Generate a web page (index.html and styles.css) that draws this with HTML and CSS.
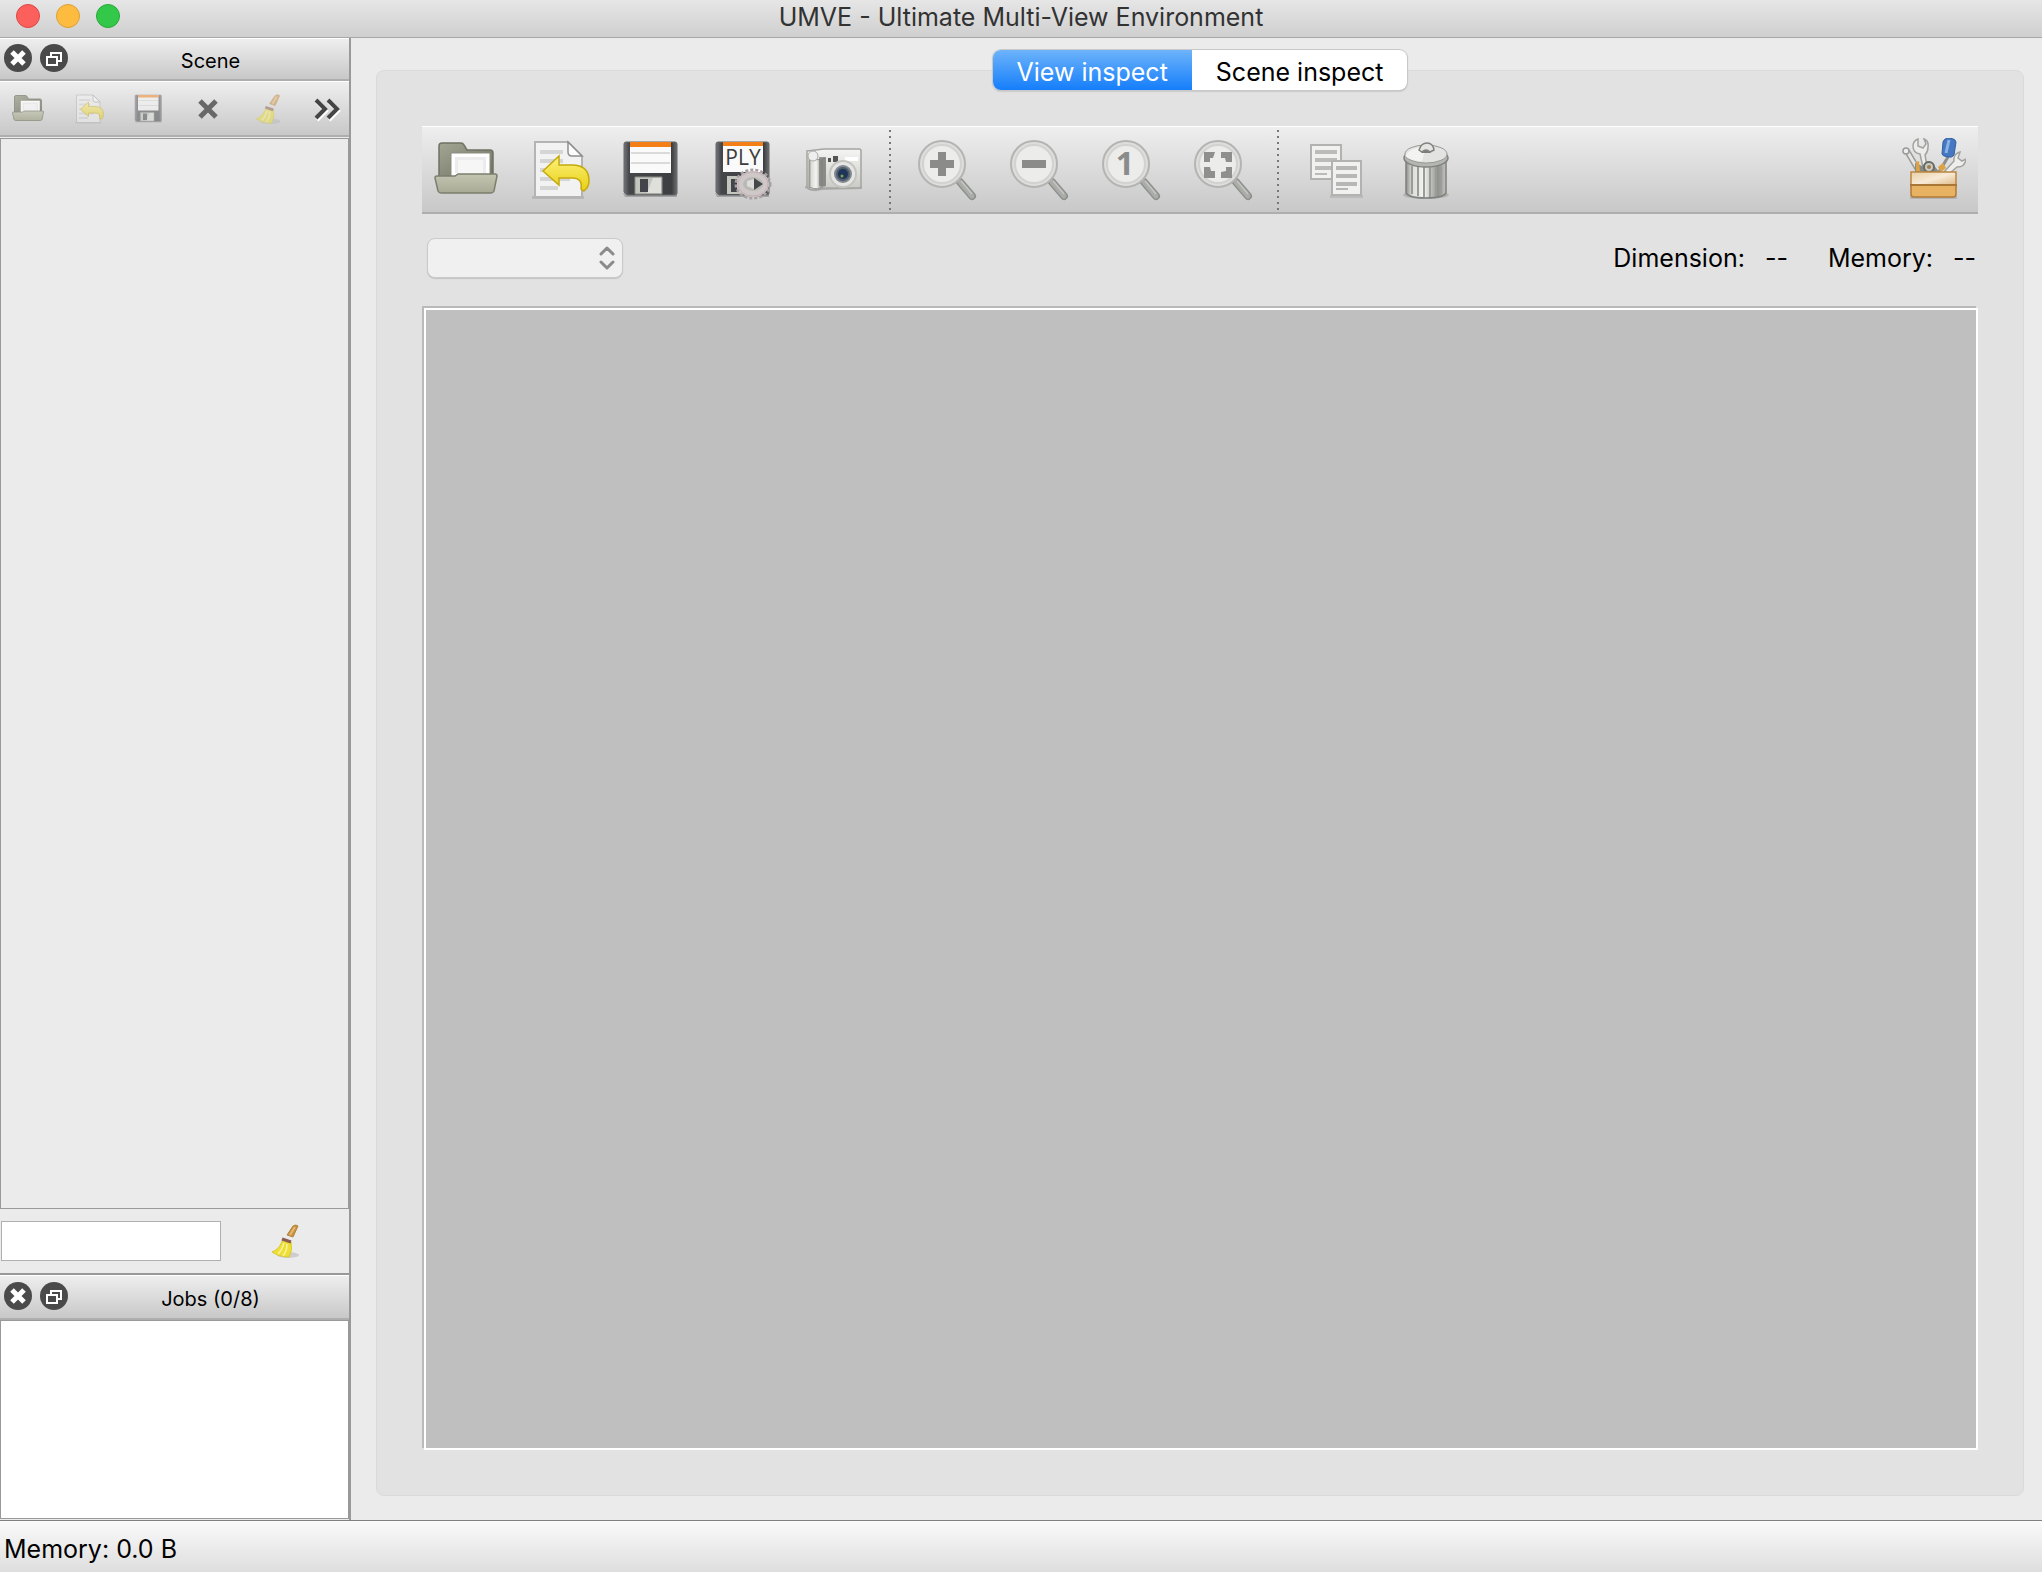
FILE: index.html
```html
<!DOCTYPE html>
<html lang="en">
<head>
  <meta charset="UTF-8">
  <meta name="viewport" content="width=device-width, initial-scale=1.0">
  <title>UMVE - Ultimate Multi-View Environment</title>
  <link rel="stylesheet" href="styles.css">
</head>
<body>
  <!-- icon sprite -->
  <svg class="sprite" aria-hidden="true">
    <defs>
      <linearGradient id="gTray" x1="0" y1="0" x2="0" y2="1">
        <stop offset="0" stop-color="#c3c5b2"/><stop offset="1" stop-color="#a8aa94"/>
      </linearGradient>
      <linearGradient id="gFolder" x1="0" y1="0" x2="1" y2="1">
        <stop offset="0" stop-color="#a3a693"/><stop offset="1" stop-color="#6d7060"/>
      </linearGradient>
      <linearGradient id="gArrow" x1="0" y1="0" x2="0" y2="1">
        <stop offset="0" stop-color="#fdf27c"/><stop offset="1" stop-color="#e8cf12"/>
      </linearGradient>
      <linearGradient id="gMetal" x1="0" y1="0" x2="1" y2="0">
        <stop offset="0" stop-color="#8d8f8a"/><stop offset="0.15" stop-color="#dcddd9"/>
        <stop offset="0.45" stop-color="#f4f4f2"/><stop offset="0.8" stop-color="#8e908b"/>
        <stop offset="1" stop-color="#c4c5c1"/>
      </linearGradient>
      <linearGradient id="gDisk" x1="0" y1="0" x2="1" y2="0">
        <stop offset="0" stop-color="#73757a"/><stop offset="0.1" stop-color="#44464a"/>
        <stop offset="0.9" stop-color="#3c3e41"/><stop offset="1" stop-color="#6d6f73"/>
      </linearGradient>
      <linearGradient id="gCamera" x1="0" y1="0" x2="0" y2="1">
        <stop offset="0" stop-color="#f5f5f3"/><stop offset="1" stop-color="#c8c9c3"/>
      </linearGradient>
      <linearGradient id="gWood" x1="0" y1="0" x2="1" y2="1">
        <stop offset="0" stop-color="#e9cfa6"/><stop offset="0.5" stop-color="#f7ead7"/>
        <stop offset="1" stop-color="#dcb67e"/>
      </linearGradient>
    </defs>

    <symbol id="icon-folder" viewBox="0 0 64 64">
      <path d="M5 40V8q0-3 3-3h19q2 0 3 2l3 5h23q3 0 3 3v25z" fill="url(#gFolder)" stroke="#6f7264" stroke-width="1.5"/>
      <path d="M17 15h39v24H17z" fill="#fff" stroke="#8b8d80"/>
      <path d="M21 19h31v16H21z" fill="#ececec"/>
      <path d="M24 22h25v13H24z" fill="#f6f6f6"/>
      <path d="M1 40q0-2 2-2h18l3-2h37q2 0 2 2l-3 15q-1 2-3 2H7q-2 0-3-2z" fill="url(#gTray)" stroke="#7c7e6d" stroke-width="1.5"/>
    </symbol>

    <symbol id="icon-revert" viewBox="0 0 64 64">
      <path d="M6 58h52v3H6z" fill="#a9a9a9" opacity="0.6"/>
      <path d="M9 4h33l14 14v41H9z" fill="#f2f2f2" stroke="#b4b4b4" stroke-width="2"/>
      <path d="M14 12h23v4H14zM14 21h23v4H14zM14 30h30v4H14zM14 39h30v4H14zM14 48h18v4H14z" fill="#d5d5d5"/>
      <path d="M42 4l14 14H46q-4 0-4-4z" fill="#fdfdfd" stroke="#8f8f8f" stroke-width="1.5"/>
      <path d="M17 33l16-15v9h13q17 0 17 16 0 6-5 10-2-1-3-2 2-11-9-11H33v7z" fill="url(#gArrow)" stroke="#c5aa0c" stroke-width="1.5"/>
    </symbol>

    <symbol id="icon-save" viewBox="0 0 64 64">
      <path d="M5 55h54v4H7z" fill="#777" opacity="0.5"/>
      <path d="M8 4h49q2 0 2 2v49q0 2-2 2H9l-3-3V6q0-2 2-2z" fill="url(#gDisk)" stroke="#65676a"/>
      <path d="M12 4h41v31H12z" fill="#fafafa"/>
      <path d="M12 4h41v5H12z" fill="#f57f17"/>
      <path d="M13 15h39M13 25h39" stroke="#dadada" stroke-width="2"/>
      <path d="M17 39h27v17H17z" fill="#c3c6bd" stroke="#8e908b"/>
      <path d="M35 40h8v15H29z" fill="#dfe0dc"/>
      <path d="M22 41h8v13h-8z" fill="#43454a"/>
    </symbol>

    <symbol id="icon-camera" viewBox="0 0 64 64">
      <path d="M3 48h57v3l-40 1q-9 3-17-2z" fill="#999" opacity="0.6"/>
      <path d="M5 13l17-2h35q2 0 2 2v35q0 2-2 2H24l-12 2q-6 0-7-4z" fill="url(#gCamera)" stroke="#a4a5a0" stroke-width="1.5"/>
      <path d="M7 19q6 5 16 1v28q-7 5-16 1z" fill="url(#gMetal)" stroke="#979893"/>
      <path d="M17 19h7v29h-7z" fill="#7d7f79" opacity="0.75"/>
      <circle cx="11" cy="18" r="5" fill="#eee" stroke="#aaa"/>
      <path d="M26 20h3v4h-3zM31 18h5v6h-5z" fill="#555"/>
      <path d="M43 19h13v4H43z" fill="#fff"/>
      <circle cx="41" cy="36" r="13" fill="#e6e7e4" stroke="#c4c5c0" stroke-width="2"/>
      <circle cx="41" cy="36" r="8" fill="#4e5d6d" stroke="#83888e" stroke-width="2"/>
      <circle cx="41" cy="36" r="5" fill="#1e3557"/>
      <circle cx="40" cy="38" r="1.5" fill="#85a04c"/>
    </symbol>

    <symbol id="icon-lens" viewBox="0 0 64 64">
      <path d="M46 44l12 14" stroke="#8d8f8b" stroke-width="8" stroke-linecap="round"/>
      <path d="M46 44l12 14" stroke="#aaaca8" stroke-width="5" stroke-linecap="round"/>
      <path d="M47 43l11 13" stroke="#c4c5c2" stroke-width="1.5"/>
      <circle cx="28" cy="26" r="23" fill="#dededc" stroke="#b4b4b2" stroke-width="2"/>
      <circle cx="28" cy="26" r="19" fill="#ececeb" stroke="#d2d2d0" stroke-width="2"/>
    </symbol>
    <symbol id="icon-zoom-in" viewBox="0 0 64 64">
      <use href="#icon-lens"/>
      <path d="M24 14h8v8h8v8h-8v8h-8v-8h-8v-8h8z" fill="#8b8b8a"/>
    </symbol>
    <symbol id="icon-zoom-out" viewBox="0 0 64 64">
      <use href="#icon-lens"/>
      <path d="M16 22h24v8H16z" fill="#8b8b8a"/>
    </symbol>
    <symbol id="icon-zoom-fit" viewBox="0 0 64 64">
      <use href="#icon-lens"/>
      <path d="M14 24V14h11l-2 6h-3v4zM31 14h11v10h-6l-1-4h-4zM14 29h6l1 4h4v7H14zM42 29v11H31v-6l5-1v-4z" fill="#8f8f8e"/>
    </symbol>

    <symbol id="icon-copy" viewBox="0 0 64 64">
      <path d="M9 7h30v34H9z" fill="#f1f1f0" stroke="#b2b2b0" stroke-width="2"/>
      <path d="M13 12h22v4H13zM13 20h22v4H13zM13 28h22v4H13zM13 35h12v2H13z" fill="#bbbbb9"/>
      <path d="M28 57h33v3H28z" fill="#999" opacity="0.35"/>
      <path d="M30 23h29v34H30z" fill="#f1f1f0" stroke="#b2b2b0" stroke-width="2"/>
      <path d="M34 28h21v4H34zM34 36h21v4H34zM34 44h21v4H34zM34 50h12v2H34z" fill="#b7b7b5"/>
    </symbol>

    <symbol id="icon-trash" viewBox="0 0 64 64">
      <ellipse cx="32" cy="57" rx="23" ry="4" fill="#888" opacity="0.4"/>
      <path d="M12 24h40v31q-3 5-20 5t-20-5z" fill="url(#gMetal)" stroke="#7f817c" stroke-width="1.5"/>
      <path d="M18 28v28M24 29v29M30 29v30M36 29v30M42 29v29M47 28v28" stroke="#9a9c97" stroke-width="2"/>
      <ellipse cx="32" cy="20" rx="22" ry="9" fill="#b4b6b1" stroke="#80827d" stroke-width="1.5"/>
      <ellipse cx="32" cy="16" rx="21" ry="9" fill="#e3e4e1" stroke="#989a95"/>
      <path d="M11 18q5-9 21-9l-4 14q-11 0-17-5z" fill="#f6f6f5" opacity="0.8"/>
      <path d="M25 12q2-7 8-7t7 7l-4 2q-4-4-8 0z" fill="#e5e6e3" stroke="#80827d" stroke-width="1.5"/>
      <path d="M27 15q5-5 10 0z" fill="#7c7e79"/>
    </symbol>

    <symbol id="icon-toolbox" viewBox="0 0 64 64">
      <path d="M18 35L5 13" stroke="#9a9b97" stroke-width="6"/>
      <path d="M18 35L5 13" stroke="#e6e6e4" stroke-width="3"/>
      <circle cx="4" cy="13" r="3" fill="#eee" stroke="#9a9b97" stroke-width="1.5"/>
      <path d="M22 34l-4-18q-7-1-7-8 0-5 5-7v7l5 2 3-4-2-5q5 2 4 8 0 5-3 8l3 17z" fill="#ececea" stroke="#a2a39f" stroke-width="1.5"/>
      <path d="M37 34l9-15" stroke="#8d8f8b" stroke-width="3"/>
      <path d="M41 4q1-4 7-4 6 1 6 4l-2 13q-2 3-6 2-6-1-6-3z" fill="#4577c2" stroke="#33609f"/>
      <path d="M47 2l-3 13" stroke="#8bb2e6" stroke-width="3"/>
      <path d="M42 34l10-11q-1-7 6-9l-2 6 4 3 4-2q-1 8-9 8l-7 6z" fill="#eeeeec" stroke="#a2a39f" stroke-width="1.5"/>
      <path d="M13 34v-9l7 3 5-5 6 3 6 8z" fill="#878983"/>
      <circle cx="27" cy="29" r="5" fill="#c9cac5" stroke="#696b66" stroke-width="2"/>
      <circle cx="27" cy="29" r="2" fill="#a27f45"/>
      <path d="M36 29l5-4 3 5-5 4zM14 24l3-1 1 10h-4z" fill="#dca344"/>
      <path d="M8 58h47v3H8z" fill="#999" opacity="0.5"/>
      <path d="M9 34h45v14H9z" fill="url(#gWood)" stroke="#bd8640" stroke-width="1.5"/>
      <path d="M9 47h45v9q0 3-3 3H12q-3 0-3-3z" fill="#e8b263" stroke="#b07a37" stroke-width="1.5"/>
      <path d="M8 47h47" stroke="#a87735" stroke-width="2"/>
    </symbol>

    <symbol id="icon-broom" viewBox="0 0 36 36">
      <ellipse cx="21" cy="32" rx="11" ry="3" fill="#888" opacity="0.3"/>
      <path d="M26 3q3-2 5 0l-5 11-6-2z" fill="#c78f3e" stroke="#b5863f"/>
      <path d="M28 4l-5 8" stroke="#e4b873" stroke-width="2"/>
      <path d="M16 16l8 3q2 8-2 15-10 0-17-5 8-3 11-13z" fill="#eedf37" stroke="#d9ca2d"/>
      <path d="M17 20q-2 7-6 11M20 21q0 7-4 12" stroke="#faf39a" stroke-width="1.5" fill="none"/>
      <path d="M15 16l9 3" stroke="#8b5d50" stroke-width="3"/>
    </symbol>

    <symbol id="icon-delete" viewBox="0 0 32 32">
      <path d="M8 8l16 16M24 8L8 24" stroke="#686868" stroke-width="5"/>
    </symbol>
    <symbol id="icon-more" viewBox="0 0 32 32">
      <path d="M6 8l9 9-9 9M18 8l9 9-9 9" transform="translate(2 1)" fill="none" stroke="#fff" stroke-width="4"/>
      <path d="M7 7l9 9-9 9M19 7l9 9-9 9" fill="none" stroke="#454545" stroke-width="4"/>
    </symbol>
    <symbol id="icon-close" viewBox="0 0 28 28">
      <circle cx="14" cy="14" r="14" fill="#4a4a4a"/>
      <path d="M8 8l12 12M20 8L8 20" stroke="#fff" stroke-width="5"/>
    </symbol>
    <symbol id="icon-float" viewBox="0 0 28 28">
      <circle cx="14" cy="14" r="14" fill="#4a4a4a"/>
      <path d="M11 12V9h10v8h-3" fill="none" stroke="#fff" stroke-width="2"/>
      <path d="M7 13h10v8H7z" fill="none" stroke="#fff" stroke-width="2"/>
    </symbol>
    <symbol id="icon-updown" viewBox="0 0 16 24">
      <path d="M2 8l6-6 6 6M2 16l6 6 6-6" fill="none" stroke="#8a8a8a" stroke-width="3" stroke-linecap="round" stroke-linejoin="round"/>
    </symbol>
  </svg>

  <header class="titlebar">
    <div class="lights">
      <button class="light red" aria-label="Close window"></button>
      <button class="light yellow" aria-label="Minimize window"></button>
      <button class="light green" aria-label="Zoom window"></button>
    </div>
    <h1 class="window-title">UMVE - Ultimate Multi-View Environment</h1>
  </header>

  <div class="workspace">
    <aside class="sidebar">
      <section class="dock dock-scene">
        <div class="dock-header">
          <button class="dock-button" aria-label="Close Scene"><svg><use href="#icon-close"/></svg></button>
          <button class="dock-button" aria-label="Float Scene"><svg><use href="#icon-float"/></svg></button>
          <h2 class="dock-title">Scene</h2>
        </div>
        <div class="toolbar small-toolbar">
          <button class="tool dimmed" aria-label="Open scene"><svg><use href="#icon-folder"/></svg></button>
          <button class="tool faded" aria-label="Reload scene"><svg><use href="#icon-revert"/></svg></button>
          <button class="tool faded" aria-label="Save scene"><svg><use href="#icon-save"/></svg></button>
          <button class="tool" aria-label="Close scene"><svg><use href="#icon-delete"/></svg></button>
          <button class="tool faded" aria-label="Clean up"><svg><use href="#icon-broom"/></svg></button>
          <button class="tool more" aria-label="More"><svg><use href="#icon-more"/></svg></button>
        </div>
        <div class="view-list"></div>
        <div class="filter-row">
          <input type="text" class="filter-input" aria-label="Filter views">
          <button class="clear-filter" aria-label="Clear filter"><svg><use href="#icon-broom"/></svg></button>
        </div>
      </section>

      <section class="dock">
        <div class="dock-header jobs-header">
          <button class="dock-button" aria-label="Close Jobs"><svg><use href="#icon-close"/></svg></button>
          <button class="dock-button" aria-label="Float Jobs"><svg><use href="#icon-float"/></svg></button>
          <h2 class="dock-title">Jobs (0/8)</h2>
        </div>
        <div class="jobs-list"></div>
      </section>
    </aside>

    <main class="content">
      <div class="tabs" role="tablist">
        <button class="tab active" role="tab" aria-selected="true">View inspect</button>
        <button class="tab" role="tab" aria-selected="false">Scene inspect</button>
      </div>
      <div class="tab-pane">
        <div class="toolbar main-toolbar">
          <button class="tool" aria-label="Open"><svg><use href="#icon-folder"/></svg></button>
          <button class="tool" aria-label="Reload"><svg><use href="#icon-revert"/></svg></button>
          <button class="tool" aria-label="Save"><svg><use href="#icon-save"/></svg></button>
          <button class="tool" aria-label="Export PLY">
            <svg viewBox="0 0 64 64">
              <path d="M5 55h54v4H7z" fill="#777" opacity="0.5"/>
              <path d="M8 4h49q2 0 2 2v49q0 2-2 2H9l-3-3V6q0-2 2-2z" fill="url(#gDisk)" stroke="#65676a"/>
              <path d="M13 4h40v30H13z" fill="#fafafa"/>
              <path d="M13 4h40v4H13z" fill="#f57f17"/>
              <path d="M17 38h28v18H17z" fill="#c3c6bd"/>
              <path d="M21 41h6v13h-6z" fill="#43454a"/>
              <text x="33" y="27" class="ply-text">PLY</text>
              <ellipse cx="43" cy="46" rx="17" ry="14" fill="none" stroke="#a8a1a2" stroke-width="3" stroke-dasharray="3 2"/>
              <ellipse cx="43" cy="46" rx="13" ry="10" fill="#b9bab5" stroke="#cfc8c9" stroke-width="6"/>
              <ellipse cx="43" cy="46" rx="15" ry="12" fill="none" stroke="#c4aeb1"/>
              <path d="M37 43l7-2v10l-7-3z" fill="#dcddd9"/>
              <path d="M44 40l9 6-9 6z" fill="#45474a"/>
            </svg>
          </button>
          <button class="tool" aria-label="Screenshot"><svg><use href="#icon-camera"/></svg></button>
          <span class="separator"></span>
          <button class="tool" aria-label="Zoom in"><svg><use href="#icon-zoom-in"/></svg></button>
          <button class="tool" aria-label="Zoom out"><svg><use href="#icon-zoom-out"/></svg></button>
          <button class="tool" aria-label="Original size">
            <svg viewBox="0 0 64 64">
              <use href="#icon-lens"/>
              <text x="27" y="37" class="one-text">1</text>
            </svg>
          </button>
          <button class="tool" aria-label="Fit to window"><svg><use href="#icon-zoom-fit"/></svg></button>
          <span class="separator"></span>
          <button class="tool" aria-label="Copy"><svg><use href="#icon-copy"/></svg></button>
          <button class="tool" aria-label="Delete"><svg><use href="#icon-trash"/></svg></button>
          <button class="tool push-right" aria-label="Tools"><svg><use href="#icon-toolbox"/></svg></button>
        </div>

        <div class="info-row">
          <div class="select-wrap">
            <select class="embedding" aria-label="Embedding"><option></option></select>
            <svg class="select-arrows"><use href="#icon-updown"/></svg>
          </div>
          <dl class="info">
            <div class="info-item"><dt>Dimension:</dt><dd>--</dd></div>
            <div class="info-item"><dt>Memory:</dt><dd>--</dd></div>
          </dl>
        </div>

        <div class="image-view"></div>
      </div>
    </main>
  </div>

  <footer class="statusbar">Memory: 0.0 B</footer>
</body>
</html>
```

FILE: styles.css
```css
* {
  box-sizing: border-box;
}

body {
  margin: 0;
  height: 100vh;
  display: flex;
  flex-direction: column;
  background-color: #ebebeb;
  color: #000;
  font-family: Inter, "Liberation Sans", sans-serif;
  font-size: 25px;
  line-height: 32px;
}

h1, h2, dl, dd {
  margin: 0;
  font-weight: normal;
}

button {
  padding: 0;
  border: none;
  background: none;
  font: inherit;
  color: inherit;
}

svg {
  display: block;
}

.sprite {
  position: absolute;
  width: 0;
  height: 0;
}

.ply-text {
  font-family: "Open Sans", sans-serif;
  font-size: 21px;
  text-anchor: middle;
  fill: #3c3c3c;
}

.one-text {
  font-family: "Noto Sans", sans-serif;
  font-size: 32px;
  font-weight: bold;
  text-anchor: middle;
  fill: #8b8b8a;
}

/* title bar */
.titlebar {
  display: grid;
  grid-template-columns: 1fr auto 1fr;
  height: 38px;
  padding: 0 16px;
  background: linear-gradient(#e6e6e6, #cfcfcf);
  border-bottom: 1px solid #a8a8a8;
}

.lights {
  display: flex;
  gap: 16px;
  padding-top: 4px;
}

.light {
  width: 24px;
  height: 24px;
  border-radius: 50%;
}

.red {
  background-color: #fc605c;
  border: 1px solid #de4643;
}

.yellow {
  background-color: #fdbc40;
  border: 1px solid #dd9f34;
}

.green {
  background-color: #34c84a;
  border: 1px solid #27a934;
}

.window-title {
  font-size: 25px;
  line-height: 34px;
  color: #323232;
}

/* layout */
.workspace {
  flex: 1;
  display: flex;
  min-height: 0;
}

.sidebar {
  width: 351px;
  display: flex;
  flex-direction: column;
  border-right: 2px solid #999;
}

.dock {
  display: flex;
  flex-direction: column;
}

.dock-scene {
  flex: 1;
}

.dock-header,
.toolbar {
  display: flex;
  align-items: center;
  background: linear-gradient(#eeeeee, #c8c8c8);
  border-top: 1px solid #fff;
  border-bottom: 2px solid #aeaeae;
}

.dock-header {
  height: 43px;
  gap: 8px;
  padding: 0 0 2px 4px;
}

.jobs-header {
  height: 45px;
}

.dock-button svg {
  width: 28px;
  height: 28px;
}

.dock-title {
  flex: 1;
  padding: 6px 4px 0 0;
  font-size: 20px;
  line-height: 28px;
  text-align: center;
}

.toolbar {
  gap: 4px;
}

.small-toolbar {
  height: 56px;
}

.small-toolbar .tool {
  width: 56px;
}

.small-toolbar .more {
  width: auto;
  flex: 1;
}

.small-toolbar svg {
  width: 32px;
  height: 32px;
  margin: 0 auto;
}

.faded {
  opacity: 0.5;
}

.dimmed {
  opacity: 0.8;
}

.view-list {
  flex: 1;
  margin-top: 1px;
  border: 1px solid #999;
}

.filter-row {
  display: flex;
  padding: 12px 0 12px 1px;
  border-bottom: 2px solid #999;
}

.filter-input {
  width: 220px;
  height: 40px;
  padding: 0 6px;
  border: 1px solid #b0b0b0;
  background-color: #fff;
  font: inherit;
}

.clear-filter {
  flex: 1;
}

.clear-filter svg {
  width: 36px;
  height: 36px;
  margin: 0 auto;
}

.jobs-list {
  height: 199px;
  margin-bottom: 1px;
  border: 1px solid #999;
  background-color: #fff;
}

/* right side */
.content {
  flex: 1;
  display: flex;
  flex-direction: column;
  padding: 12px 18px 24px 25px;
}

.tabs {
  display: flex;
  align-self: center;
  height: 40px;
  z-index: 1;
  background-color: #fff;
  border-radius: 8px;
  box-shadow: 0 0 0 1px #c8c8c8, 0 1px 2px #999;
}

.tab {
  padding: 3px 24px 0;
}

.tab.active {
  border-radius: 8px 0 0 8px;
  background: linear-gradient(#6db3fa, #157efb);
  color: #fff;
}

.tab-pane {
  flex: 1;
  display: flex;
  flex-direction: column;
  margin-top: -20px;
  padding: 55px 45px 45px;
  background-color: #e2e2e2;
  border: 1px solid #dadada;
  border-radius: 8px;
}

.main-toolbar {
  height: 88px;
}

.main-toolbar .tool {
  width: 88px;
}

.main-toolbar svg {
  width: 64px;
  height: 64px;
  margin: 0 auto;
}

.separator {
  width: 16px;
  height: 80px;
  background: repeating-linear-gradient(#777 0 2px, transparent 2px 6px) center / 2px 100% no-repeat;
}

.push-right {
  margin-left: auto;
}

.info-row {
  display: flex;
  justify-content: space-between;
  align-items: center;
  margin: 24px 0 28px;
  padding: 0 2px 0 5px;
}

.select-wrap {
  position: relative;
}

.embedding {
  display: block;
  width: 196px;
  height: 40px;
  padding: 0 32px 0 12px;
  appearance: none;
  border: 1px solid #cacaca;
  border-radius: 8px;
  background-color: #f0f0f0;
  box-shadow: 0 1px 1px #c4c4c4;
  font: inherit;
}

.select-arrows {
  position: absolute;
  top: 8px;
  right: 8px;
  width: 16px;
  height: 24px;
  pointer-events: none;
}

.info {
  display: flex;
  gap: 40px;
}

.info-item {
  display: flex;
  gap: 20px;
}

.image-view {
  flex: 1;
  background-color: #bfbfbf;
  border: 2px solid #fff;
  box-shadow: -2px -2px 0 #b9b9b9;
  margin: 2px 0 0 2px;
}

/* status bar */
.statusbar {
  height: 52px;
  padding: 12px 4px;
  border-top: 1px solid #808080;
  background: linear-gradient(#fafafa, #dedede);
}
```
